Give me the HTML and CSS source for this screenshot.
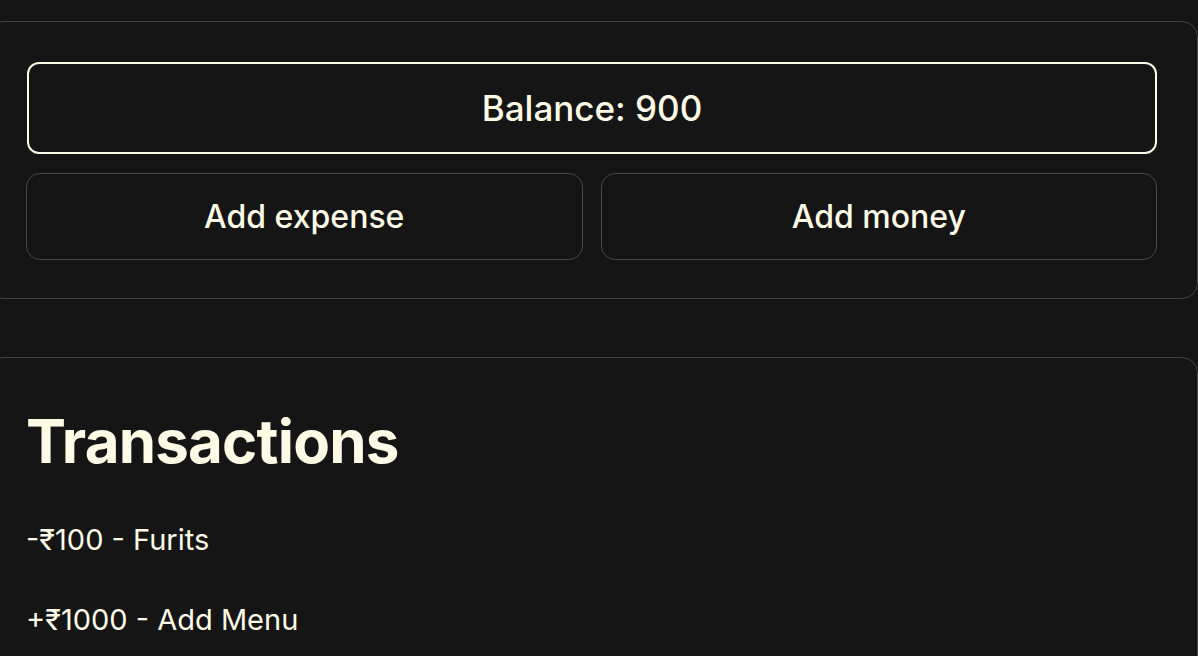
FILE: index.html
```html
<!DOCTYPE html>
<html lang="en">
<head>
<meta charset="utf-8">
<title>Expense tracker</title>
<link rel="stylesheet" href="styles.css">
</head>
<body>
<main class="page">
  <section class="card wallet">
    <div class="balance">Balance: 900</div>
    <div class="actions">
      <button class="btn">Add expense</button>
      <button class="btn">Add money</button>
    </div>
  </section>
  <section class="card history">
    <h1 class="title">Transactions</h1>
    <ul class="list">
      <li>-₹100 - Furits</li>
      <li>+₹1000 - Add Menu</li>
    </ul>
  </section>
</main>
</body>
</html>
```
FILE: styles.css
```css
html, body {
  margin: 0;
  padding: 0;
  background: #151515;
  overflow: hidden;
}
body {
  font-family: Inter, "Noto Sans", sans-serif;
  color: #fdfbe6;
}
.page {
  width: 1211px;
  margin-left: -13px;
  padding-top: 21px;
  display: flex;
  flex-direction: column;
  gap: 58px;
}
.card {
  border: 1px solid #444444;
  border-radius: 16px;
  background: #151515;
  box-sizing: border-box;
}
.wallet {
  padding: 40px 40px 38px 38px;
  display: flex;
  flex-direction: column;
  gap: 19px;
}
.balance {
  height: 92px;
  box-sizing: border-box;
  border: 2px solid #fdfbe6;
  border-radius: 12px;
  display: flex;
  align-items: center;
  justify-content: center;
  font-size: 35px;
  font-weight: 500;
  margin-left: 1px;
}
.actions {
  display: grid;
  grid-template-columns: 1fr 1fr;
  gap: 18px;
}
.btn {
  height: 87px;
  background: #151515;
  border: 1px solid #4a4a4a;
  border-radius: 14px;
  color: #fdfbe6;
  font-family: inherit;
  font-size: 32px;
  font-weight: 500;
}
.history {
  padding: 46px 38px 40px 38px;
  height: 400px;
}
.title {
  margin: 0;
  font-size: 60px;
  font-weight: 700;
  line-height: 74px;
  letter-spacing: -0.8px;
}
.list {
  list-style: none;
  margin: 44px 0 0;
  padding: 0;
  display: flex;
  flex-direction: column;
  gap: 44px;
  font-size: 29px;
  line-height: 36px;
}
```
